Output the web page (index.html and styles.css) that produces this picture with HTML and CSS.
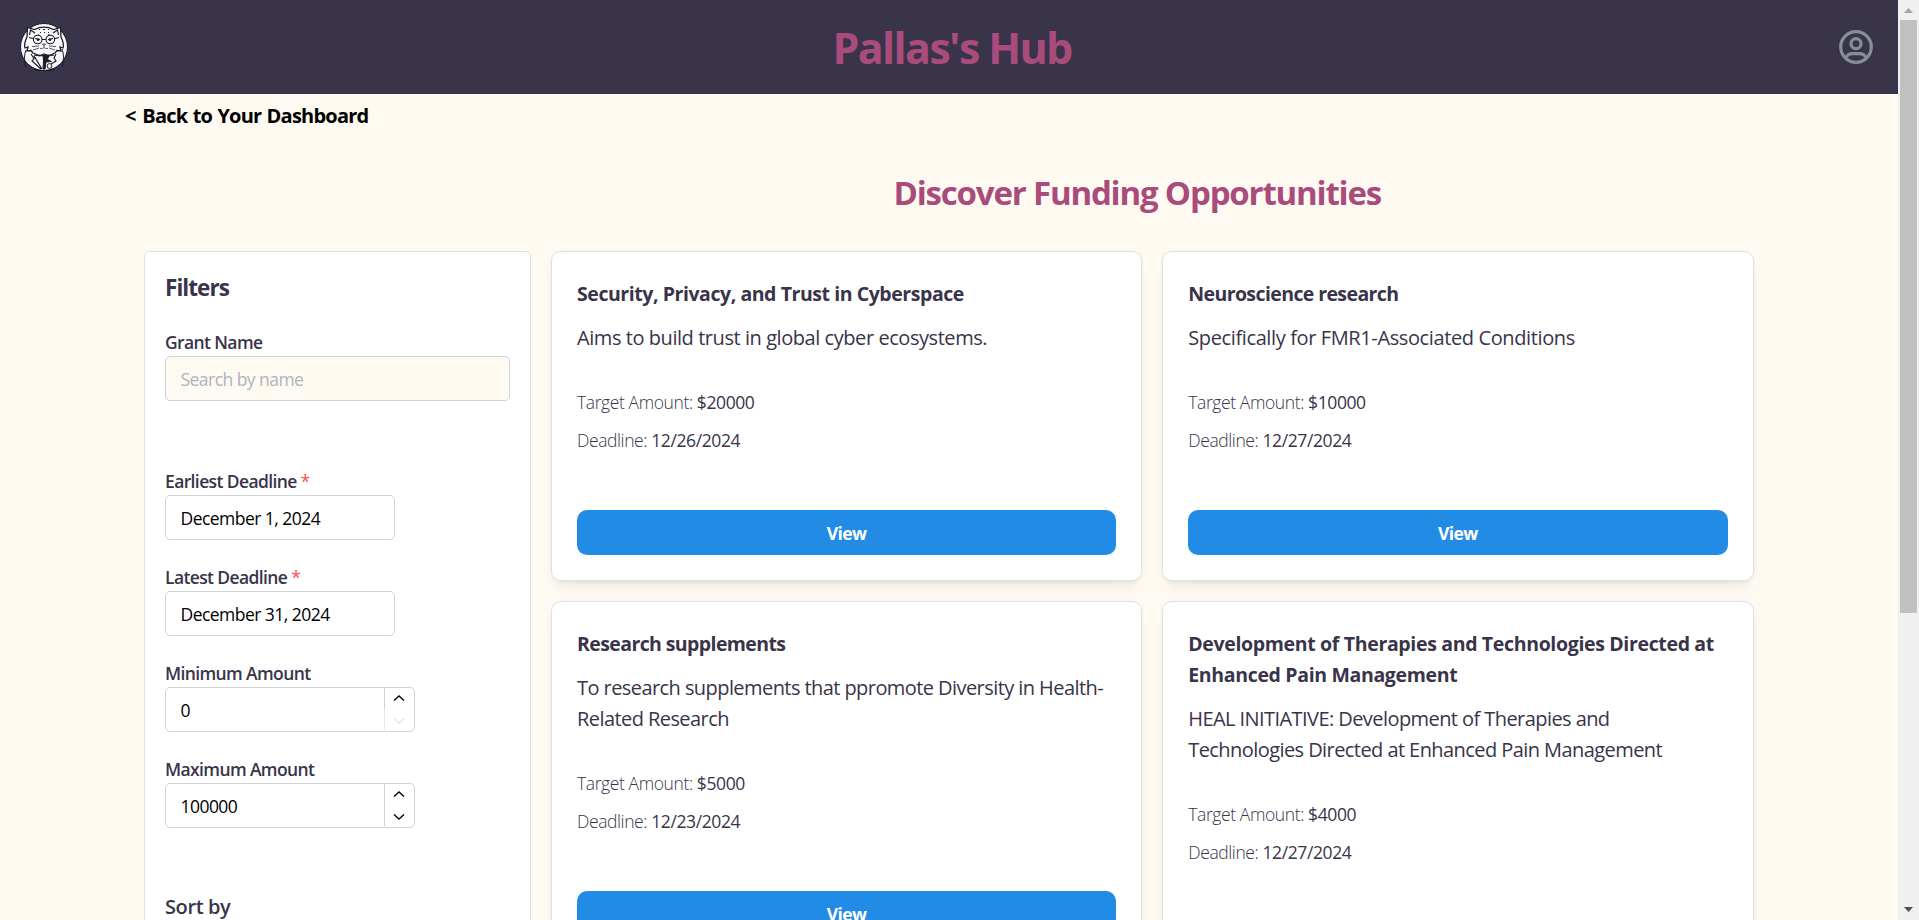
FILE: index.html
```html
<!DOCTYPE html>
<html lang="en">
<head>
<meta charset="utf-8">
<title>Pallas's Hub</title>
<link rel="stylesheet" href="styles.css">
</head>
<body>
<div class="window">
<div class="page">
  <header class="header">
    <svg class="logo" viewBox="0 0 48 48" fill="none" stroke="#1d1b2a">
      <circle cx="24" cy="24" r="23.5" fill="#f8f8fa" stroke-width="1"/>
      <path d="M6 44C4 38 4 32 6 27M42 44c2-7 2-13 0-18" stroke-width="1"/>
      <path d="M7 14 7.500 4.500l7 2c6-3 13-3 19 0l7-2L41 14c2 4 3 8 2 11l-3-1 1 4-4-.5-2 2.500c-6 3.500-16 3.500-22 0l-2-2.500-4 .5 1-4-3 1C4 22 5 18 7 14z" fill="#f8f8fa" stroke-width="1.300"/>
      <path d="m9.500 12 1-5 4.500 3M38.500 12l-1-5-4.500 3" stroke-width="1.200"/>
      <path d="M19 6.500h1m3 0h2m3 0h1M20 9.500h1m3 0h1m3 0h1M18 12h1m9 0h2" stroke-width="1"/>
      <circle cx="17.700" cy="16.500" r="4.300" stroke-width="1.100"/>
      <circle cx="30.300" cy="16.500" r="4.300" stroke-width="1.100"/>
      <path d="M22 16.500h4M13 15.500l-4-1m26 1 4-1" stroke-width="1.100"/>
      <path d="m15 15.500 5 1m13-1-5 1" stroke-width="1.200"/>
      <circle cx="18" cy="16.800" r="1.300" fill="#1d1b2a" stroke="none"/>
      <circle cx="30" cy="16.800" r="1.300" fill="#1d1b2a" stroke="none"/>
      <path d="M22.500 21h3L24 22.800zm1.500 1.500v2m-4 1c2 0 3 0 4-1 1 1 2 1 4 1M19 23l-7 .5m7 1.500-6 2m16-4 7 .5m-7 1.500 6 2" stroke-width=".7"/>
      <path d="m11 31 3 4.500-2 2.500 9 8M14 33l8 13M36 31l-2 4 2 3-5 3M14 32l6 1 4-2 5 2 5-1" stroke-width="1.200"/>
      <path d="m23 33 6-.5-1.500 4 4 2-5.500.5-1 7h-2l.5-8z" fill="#1d1b2a"/>
      <circle cx="29.500" cy="43" r="2.400" fill="#f8f8fa"/>
      <path d="M14 46c6 2.500 14 2.500 20 0" stroke-width="1.600"/>
    </svg>
    <h1 class="brand">Pallas's Hub</h1>
    <svg class="user" viewBox="0 0 34 34"><circle cx="17" cy="17" r="15.300"/><circle cx="17" cy="13.700" r="5"/><path d="M6.800 27.800c1.500-2.700 3.700-4.100 6.700-4.100h7c3 0 5.200 1.400 6.700 4.100"/></svg>
  </header>
  <a class="back"><span class="back-mark">&lt;</span> Back to Your Dashboard</a>
  <main class="main">
    <h2 class="title">Discover Funding Opportunities</h2>
    <aside class="filters">
      <h3 class="filters-title">Filters</h3>
      <div class="field field-name">
        <label class="label">Grant Name</label>
        <div class="input input-search"><span>Search by name</span></div>
      </div>
      <div class="field">
        <label class="label">Earliest Deadline <span class="required">*</span></label>
        <div class="input input-date"><span>December 1, 2024</span></div>
      </div>
      <div class="field">
        <label class="label">Latest Deadline <span class="required">*</span></label>
        <div class="input input-date"><span>December 31, 2024</span></div>
      </div>
      <div class="field">
        <label class="label">Minimum Amount</label>
        <div class="input input-number"><span>0</span>
          <div class="steps">
            <div class="step"><svg class="chevron" viewBox="0 0 12 8"><path d="M1 6.500 6 2l5 4.500"/></svg></div>
            <div class="step step-down step-off"><svg class="chevron" viewBox="0 0 12 8"><path d="m1 1.500 5 4.500 5-4.500"/></svg></div>
          </div>
        </div>
      </div>
      <div class="field">
        <label class="label">Maximum Amount</label>
        <div class="input input-number"><span>100000</span>
          <div class="steps">
            <div class="step"><svg class="chevron" viewBox="0 0 12 8"><path d="M1 6.500 6 2l5 4.500"/></svg></div>
            <div class="step step-down"><svg class="chevron" viewBox="0 0 12 8"><path d="m1 1.500 5 4.500 5-4.500"/></svg></div>
          </div>
        </div>
      </div>
      <h4 class="sort">Sort by</h4>
    </aside>
    <section class="cards">
      <article class="card">
        <h3 class="card-title">Security, Privacy, and Trust in Cyberspace</h3>
        <p class="desc">Aims to build trust in global cyber ecosystems.</p>
        <p class="meta"><span class="key">Target Amount:</span> $20000</p>
        <p class="meta"><span class="key">Deadline:</span> 12/26/2024</p>
        <div class="button">View</div>
      </article>
      <article class="card">
        <h3 class="card-title title-short">Neuroscience research</h3>
        <p class="desc desc-wide">Specifically for FMR1-Associated Conditions</p>
        <p class="meta"><span class="key">Target Amount:</span> $10000</p>
        <p class="meta"><span class="key">Deadline:</span> 12/27/2024</p>
        <div class="button">View</div>
      </article>
      <article class="card">
        <h3 class="card-title title-short">Research supplements</h3>
        <p class="desc desc-tight">To research supplements that ppromote Diversity in Health-<br>Related Research</p>
        <p class="meta"><span class="key">Target Amount:</span> $5000</p>
        <p class="meta"><span class="key">Deadline:</span> 12/23/2024</p>
        <div class="button">View</div>
      </article>
      <article class="card">
        <h3 class="card-title title-long">Development of Therapies and Technologies Directed at<br>Enhanced Pain Management</h3>
        <p class="desc desc-tight">HEAL INITIATIVE: Development of Therapies and<br>Technologies Directed at Enhanced Pain Management</p>
        <p class="meta"><span class="key">Target Amount:</span> $4000</p>
        <p class="meta"><span class="key">Deadline:</span> 12/27/2024</p>
        <div class="button">View</div>
      </article>
    </section>
  </main>
</div>
<div class="scrollbar">
  <svg class="arrow" viewBox="0 0 21 20"><path d="M6 13h9l-4.500-5z" fill="#a3a3a3"/></svg>
  <div class="thumb"></div>
  <svg class="arrow" viewBox="0 0 21 20"><path d="M6 7h9l-4.500 5z" fill="#505050"/></svg>
</div>
</div>
</body>
</html>
```
FILE: styles.css
```css
* { box-sizing: border-box; margin: 0; padding: 0; }
body { height: 920px; overflow: hidden; font-family: "Open Sans", "Noto Sans", sans-serif; color: #39344a; }
.window { display: flex; width: 1919px; height: 920px; overflow: hidden; }
.page { width: 1898px; height: 920px; overflow: hidden; background: #fef9f1; }
.header { display: flex; justify-content: space-between; align-items: center; height: 94px; padding: 0 25px 0 20px; background: #39344a; }
.logo { width: 48px; height: 48px; }
.brand { padding: 2px 3px 0 0; font-size: 43px; line-height: 56px; font-weight: 700; letter-spacing: -1.650px; color: #a94c7b; white-space: nowrap; }
.user { width: 34px; height: 34px; fill: none; stroke: #868e96; stroke-width: 3.200; }
.back { display: block; padding: 6px 0 1px 125px; font-size: 20px; line-height: 31px; font-weight: 700; letter-spacing: -.78px; word-spacing: .8px; color: #000; white-space: nowrap; }
.back-mark { margin-right: 1.500px; }
.main { display: grid; grid-template-columns: 387px 1202.500px; column-gap: 20px; padding: 35px 0 0 144px; }
.title { grid-column: 2; padding-right: 30px; font-size: 33px; line-height: 52px; font-weight: 700; letter-spacing: -1.180px; color: #a94c7b; text-align: center; margin-bottom: 32px; white-space: nowrap; }
.filters { grid-column: 1; height: 900px; padding: 19px 20px 20px; background: #fff; border: 1px solid #dee2e6; border-radius: 5px; }
.filters-title { font-size: 22.500px; line-height: 34px; font-weight: 700; letter-spacing: -.95px; margin-bottom: 24px; }
.field { margin-bottom: 24px; }
.field-name { margin-bottom: 67px; }
.label { display: block; font-size: 17.500px; line-height: 27px; font-weight: 600; letter-spacing: -.62px; white-space: nowrap; }
.required { color: #fa5252; font-weight: 400; }
.input { display: flex; align-items: center; height: 45px; padding-left: 14.500px; font-size: 17.500px; letter-spacing: -.54px; color: #000; background: #fff; border: 1px solid #ced4da; border-radius: 5px; white-space: nowrap; }
.input-search { width: 345px; background: #fef9f1; color: #adb5bd; }
.input-date { width: 230px; }
.input-number { width: 250px; justify-content: space-between; }
.steps { width: 30px; height: 43px; }
.step { display: flex; align-items: center; justify-content: center; height: 21px; padding: 0 2px 2px 0; border-left: 1px solid #ced4da; }
.step-down { padding: 3px 2px 0 0; }
.step-off { opacity: .5; }
.chevron { width: 12px; height: 8px; fill: none; stroke: #000; stroke-width: 1.400; }
.step-off .chevron { stroke: #ced4da; }
.sort { margin-top: 65px; font-size: 20px; line-height: 28px; font-weight: 600; letter-spacing: -.4px; }
.cards { grid-column: 2; display: grid; grid-template-columns: 1fr 1fr; gap: 20px; align-items: stretch; align-content: start; }
.card { display: flex; flex-direction: column; padding: 26px 25px 25px; background: #fff; border: 1px solid #dee2e6; border-radius: 10px; box-shadow: 0 1px 4px rgba(0,0,0,.05), 0 12px 18px -6px rgba(0,0,0,.05), 0 8px 8px -6px rgba(0,0,0,.04); white-space: nowrap; }
.card-title { font-size: 19.500px; line-height: 31px; font-weight: 700; letter-spacing: -.44px; margin-bottom: 13px; }
.title-short { letter-spacing: -.6px; }
.title-long { letter-spacing: -.34px; }
.desc { font-size: 20px; line-height: 31px; letter-spacing: -.44px; margin-bottom: 36px; }
.desc-wide { letter-spacing: -.38px; }
.desc-tight { letter-spacing: -.57px; }
.meta { font-size: 17.500px; line-height: 27px; letter-spacing: -.4px; margin-bottom: 11px; }
.key { font-weight: 300; }
.button { display: flex; align-items: center; justify-content: center; height: 45px; margin-top: 45px; background: #228be6; border-radius: 10px; color: #fff; font-size: 17.500px; font-weight: 700; letter-spacing: -.6px; }
.scrollbar { display: flex; flex-direction: column; width: 21px; height: 920px; background: #f0f0f0; }
.arrow { display: block; width: 21px; height: 20px; }
.thumb { width: 17px; height: 593px; margin: 0 2px 287px; background: #c1c1c1; }
```
